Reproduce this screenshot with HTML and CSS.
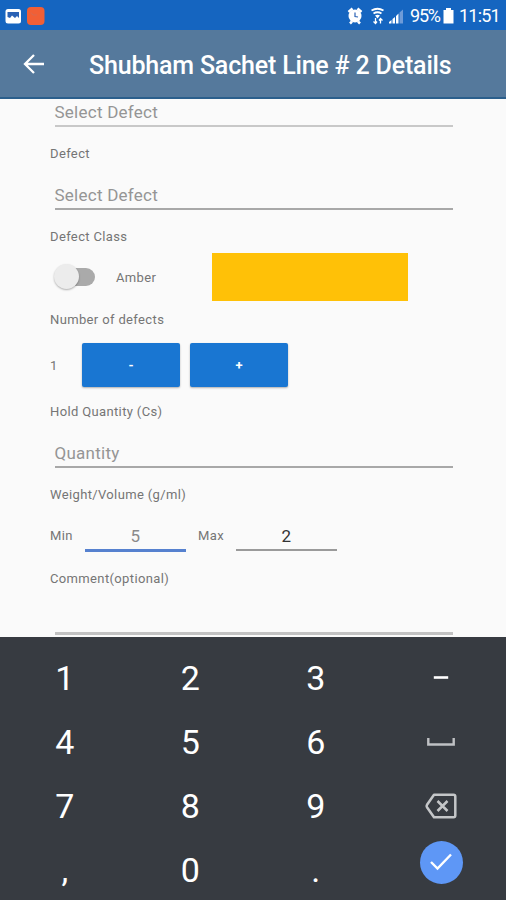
FILE: index.html
```html
<!DOCTYPE html>
<html lang="en">
<head>
    <meta charset="UTF-8">
    <meta name="viewport" content="width=device-width, initial-scale=1.0">
    <title>Line Details</title>
    <link rel="stylesheet" href="styles.css">
</head>
<body>
    <div class="status-bar">
        <svg class="status-left" width="48" height="20" viewBox="0 0 48 20">
            <rect x="5.5" y="3" width="15.5" height="14.5" rx="2.5" fill="#fff"/>
            <path d="M7.5 6h11.5v6l-2-2-2 2-3-2.5-2 2.500-2.500-1z" fill="#2a62b5"/>
            <rect x="27" y="1" width="17.500" height="18" rx="4" fill="#f15f35"/>
            <path d="M31 6.500l2 2.500h4" fill="none" stroke="#d9694f" stroke-width="1"/>
        </svg>
        <svg class="status-icons" width="62" height="20" viewBox="0 0 62 20">
            <!-- alarm -->
            <path d="M2.500 6l4-3.500M15.500 6l-4-3.500M4 17.500l2-2M14 17.500l-2-2" stroke="#fff" stroke-width="2.500"/>
            <circle cx="9" cy="10" r="6.500" fill="#fff"/>
            <path d="M9 6.500v4l3 .5" fill="none" stroke="#2a62b5" stroke-width="1.200"/>
            <!-- wifi -->
            <path d="M25.500 4.500q6-3.500 12 0M27.500 7.500q4-2.500 8 0" fill="none" stroke="#fff" stroke-width="1.800"/>
            <path d="M29 9.500q2.500-1.500 5 0l-2.500 3z" fill="#fff"/>
            <path d="M29.500 12v5.500M27.500 15.500l2 2 1.500-2M34.500 17.500V13M33 14.500l1.500-2 2 2" fill="none" stroke="#fff" stroke-width="1.300"/>
            <!-- signal -->
            <path d="M43 17.500v-1.500l2.500-2v3.500zM46.500 17.500v-4.500l2.500-2v6.500zM50 17.500v-7.500l2.500-2.500v10z" fill="#fff"/>
            <path d="M53.500 17.500V6.500l3.500-3v14z" fill="#6e9bd8"/>
        </svg>
        <span class="battery-text">95%</span>
        <svg class="battery" width="11" height="16" viewBox="0 0 11 16">
            <path d="M3 0h5v2h2.500v13.500h-10V2H3z" fill="#fff"/>
        </svg>
        <span class="clock">11:51</span>
    </div>

    <div class="app-bar">
        <svg class="back" width="22" height="22" viewBox="0 0 22 22">
            <path d="M21 11H2.500M11 2L2 11l9 9" fill="none" stroke="#fff" stroke-width="2.300"/>
        </svg>
        <h1>Shubham Sachet Line # 2 Details</h1>
    </div>

    <div class="form">
        <div class="field field-top">Select Defect</div>
        <div class="label label-defect">Defect</div>
        <div class="field">Select Defect</div>
        <div class="label">Defect Class</div>
        <div class="class-row">
            <div class="switch"><div class="thumb"></div></div>
            <span class="class-name">Amber</span>
            <div class="swatch"></div>
        </div>
        <div class="label label-number">Number of defects</div>
        <div class="counter-row">
            <span class="count">1</span>
            <button type="button">-</button>
            <button type="button">+</button>
        </div>
        <div class="label label-hold">Hold Quantity (Cs)</div>
        <div class="field">Quantity</div>
        <div class="label">Weight/Volume (g/ml)</div>
        <div class="range-row">
            <span class="min-label">Min</span>
            <div class="num active">5</div>
            <span class="max-label">Max</span>
            <div class="num">2</div>
        </div>
        <div class="label label-comment">Comment(optional)</div>
        <div class="field field-comment"></div>
    </div>

    <div class="keypad">
        <div class="key">1</div>
        <div class="key">2</div>
        <div class="key">3</div>
        <div class="key"><svg width="16" height="4" viewBox="0 0 16 4"><path d="M.8 1.500h14.400" stroke="#fff" stroke-width="2.600"/></svg></div>
        <div class="key">4</div>
        <div class="key">5</div>
        <div class="key">6</div>
        <div class="key"><svg width="30" height="10" viewBox="0 0 30 10"><path d="M2.300 1v6.500h25.400V1" fill="none" stroke="#bfc1c4" stroke-width="2.400"/></svg></div>
        <div class="key">7</div>
        <div class="key">8</div>
        <div class="key">9</div>
        <div class="key">
            <svg width="32" height="26" viewBox="0 0 32 26">
                <path d="M9 1.700h19.500q1.800 0 1.800 1.800v19q0 1.800-1.800 1.800H9L2 14.200q-.7-1.200 0-2.400z" fill="none" stroke="#c4c6c8" stroke-width="2.500" stroke-linejoin="round"/>
                <path d="M12.500 8l10 10M22.500 8l-10 10" stroke="#c4c6c8" stroke-width="2.500"/>
            </svg>
        </div>
        <div class="key">,</div>
        <div class="key">0</div>
        <div class="key">.</div>
        <div class="key key-done">
            <div class="done">
                <svg width="22" height="18" viewBox="0 0 22 18"><path d="M1 9l6.500 6.500L21 1.500" fill="none" stroke="#fff" stroke-width="2.400"/></svg>
            </div>
        </div>
    </div>
</body>
</html>
```
FILE: styles.css
```css
* {
    box-sizing: border-box;
}
body {
    margin: 0;
    width: 506px;
    height: 900px;
    overflow: hidden;
    font-family: Roboto, sans-serif;
    background-color: #fafafa;
    color: #757575;
}
svg {
    display: block;
    flex: none;
}
.status-bar {
    display: flex;
    align-items: center;
    height: 30px;
    padding-top: 1px;
    background-color: #1565c0;
    color: #fff;
    font-size: 18px;
    white-space: nowrap;
}
.status-icons {
    margin-left: 298px;
}
.battery-text {
    width: 31px;
    margin-left: 2px;
    letter-spacing: -1.2px;
}
.battery {
    margin-left: 2px;
}
.clock {
    margin-left: 5px;
    letter-spacing: -0.8px;
}
.app-bar {
    display: flex;
    align-items: center;
    height: 69px;
    padding: 2px 0 0 23px;
    background-color: #55799c;
    border-bottom: 2px solid #2b5f8c;
    color: #fff;
}
.back {
    margin-top: -2px;
}
h1 {
    margin: 2px 0 0 44px;
    font-size: 25px;
    font-weight: 500;
    letter-spacing: -0.18px;
    line-height: 30px;
    white-space: nowrap;
}
.form {
    height: 538px;
    padding-left: 50px;
    font-size: 13px;
    letter-spacing: 0.36px;
    overflow: hidden;
}
.field {
    width: 398px;
    height: 28px;
    margin: 18px 0 0 4.5px;
    border-bottom: 2px solid #a8a8a8;
    font-size: 17px;
    letter-spacing: 0.25px;
    line-height: 26px;
    color: #959595;
}
.field-top {
    margin-top: 0;
    border-color: #c8c8c8;
}
.label {
    height: 20px;
    margin-top: 17px;
    line-height: 20px;
}
.class-row {
    display: flex;
    align-items: center;
    height: 48px;
    margin-top: 6px;
}
.switch {
    width: 37px;
    height: 18px;
    margin-left: 8px;
    border-radius: 9px;
    background-color: #aaa;
}
.thumb {
    width: 25px;
    height: 25px;
    margin: -4px 0 0 -4px;
    border-radius: 50%;
    background-color: #ececec;
    box-shadow: 0 1px 2px rgba(0, 0, 0, 0.3);
}
.class-name {
    width: 96px;
    margin-left: 21px;
}
.swatch {
    width: 196px;
    height: 48px;
    background-color: #ffc107;
}
.label-number {
    margin-top: 9px;
}
.counter-row {
    display: flex;
    align-items: center;
    height: 44px;
    margin-top: 13px;
}
.count {
    width: 32px;
}
button {
    width: 98px;
    height: 44px;
    margin-right: 10px;
    padding: 0;
    border: none;
    border-radius: 2px;
    background-color: #1976d2;
    box-shadow: 0 1px 2px rgba(0, 0, 0, 0.3);
    color: #fff;
    font-family: Roboto, sans-serif;
    font-size: 13px;
    font-weight: 700;
}
.label-hold {
    margin-top: 15px;
}
.range-row {
    display: flex;
    height: 28px;
    margin-top: 19px;
    line-height: 24px;
}
.min-label {
    width: 35px;
}
.max-label {
    width: 38px;
    margin-left: 12px;
}
.num {
    width: 101px;
    height: 27px;
    border-bottom: 2px solid #9a9a9a;
    font-size: 17px;
    text-align: center;
    color: #333;
}
.num.active {
    height: 28px;
    border-bottom: 3px solid #5681cf;
    color: #8a8a8a;
}
.label-comment {
    margin-top: 17px;
}
.field-comment {
    border-bottom: 3px solid #c2c2c2;
}
.keypad {
    display: grid;
    grid-template-columns: repeat(4, 125.5px);
    grid-auto-rows: 64px;
    height: 263px;
    padding: 9px 0 0 2px;
    background-color: #373b41;
    color: #fff;
    font-size: 34px;
}
.key {
    display: flex;
    align-items: center;
    justify-content: center;
}
.key-done {
    padding-bottom: 16px;
}
.done {
    display: flex;
    align-items: center;
    justify-content: center;
    width: 43px;
    height: 43px;
    border-radius: 50%;
    background-color: #5e97f6;
}
```
